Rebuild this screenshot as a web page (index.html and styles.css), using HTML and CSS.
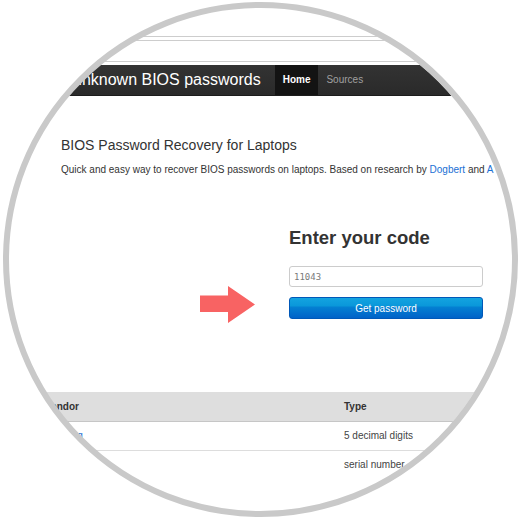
FILE: index.html
```html
<!DOCTYPE html>
<html lang="en">
  <head>
    <meta charset="UTF-8" />
    <meta name="viewport" content="width=device-width, initial-scale=1.0" />
    <title>BIOS Password Recovery for Laptops</title>
    <link rel="stylesheet" href="styles.css">
  </head>
  <body>
    <div class="page">
      <div class="chrome">
        <div class="chrome-tabs"></div>
        <div class="chrome-address"></div>
      </div>

      <nav class="topbar">
        <a class="brand" href="#">unknown BIOS passwords</a>
        <ul class="nav">
          <li class="active"><a href="#">Home</a></li>
          <li><a href="#">Sources</a></li>
        </ul>
      </nav>

      <div class="intro">
        <h1>BIOS Password Recovery for Laptops</h1>
        <p>Quick and easy way to recover BIOS passwords on laptops. Based on research by <a href="#">Dogbert</a> and <a href="#">A</a></p>
      </div>

      <div class="code-row">
        <svg class="arrow" width="55" height="37" viewBox="0 0 55 37">
          <polygon points="0,9.5 28,9.5 28,0 55,18.5 28,37 28,26 0,26" fill="#f86363" />
        </svg>
        <form class="code-form" onsubmit="event.preventDefault()">
          <h2>Enter your code</h2>
          <input type="text" class="code-input" value="11043" />
          <button type="submit" class="btn-primary">Get password</button>
        </form>
      </div>

      <table class="vendors">
        <thead>
          <tr><th class="col-vendor">Vendor</th><th>Type</th></tr>
        </thead>
        <tbody>
          <tr><td><a href="#">Compaq</a></td><td>5 decimal digits</td></tr>
          <tr><td><a href="#">Dell</a></td><td>serial number</td></tr>
        </tbody>
      </table>
    </div>
    <div class="lens-ring"></div>
  </body>
</html>
```

FILE: styles.css
```css
* {
  margin: 0;
  padding: 0;
  box-sizing: border-box;
}

body {
  font-family: "Liberation Sans", Arial, sans-serif;
  background: #ffffff;
  color: #333333;
  width: 520px;
  height: 520px;
  overflow: hidden;
}

a {
  color: #1a6fd4;
  text-decoration: none;
}

/* pagina ritagliata dalla lente */
.page {
  width: 520px;
  height: 520px;
  overflow: hidden;
  clip-path: circle(252px at 260px 259.5px);
}

.lens-ring {
  position: absolute;
  left: 2.5px;
  top: 2px;
  width: 515px;
  height: 515px;
  border: 6px solid #c9c9c9;
  border-radius: 50%;
  pointer-events: none;
}

/* barra del browser */
.chrome {
  padding-top: 36px;
}

.chrome-tabs {
  height: 5px;
  border-top: 1px solid #cdcdcd;
  border-bottom: 1px solid #cdcdcd;
}

.chrome-address {
  height: 21px;
  border-bottom: 1px solid #cdcdcd;
}

/* navbar */
.topbar {
  margin-top: 3px;
  height: 31px;
  background: linear-gradient(#333333, #2a2a2a);
  border-bottom: 1px solid #1c1c1c;
  display: flex;
  align-items: stretch;
  padding-left: 73px;
}

.brand {
  color: #ffffff;
  font-size: 16px;
  line-height: 30px;
  margin-right: 14px;
}

.nav {
  list-style: none;
  display: flex;
}

.nav a {
  display: block;
  padding: 0 8px;
  font-size: 10px;
  line-height: 30px;
  color: #a0a0a0;
}

.nav .active a {
  background: #131313;
  color: #ffffff;
  font-weight: bold;
}

/* intro */
.intro {
  padding: 39px 0 0 61px;
}

.intro h1 {
  font-size: 14px;
  font-weight: normal;
  line-height: 20px;
}

.intro p {
  margin-top: 8px;
  font-size: 10px;
  line-height: 14px;
  white-space: nowrap;
}

/* form codice */
.code-row {
  margin-top: 50px;
  padding-left: 200px;
  display: flex;
  align-items: flex-end;
  gap: 34px;
}

.arrow {
  display: block;
  margin-bottom: -4px;
}

.code-form {
  width: 194px;
  display: flex;
  flex-direction: column;
}

.code-form h2 {
  font-size: 18.5px;
  line-height: 22px;
  margin-bottom: 17px;
}

.code-input {
  height: 21px;
  border: 1px solid #cccccc;
  border-radius: 3px;
  padding: 0 4px;
  font-family: "DejaVu Sans Mono", "Liberation Mono", monospace;
  font-size: 9px;
  color: #7a7a7a;
}

.btn-primary {
  margin-top: 10px;
  height: 22px;
  border: 1px solid #0058b8;
  border-radius: 3px;
  background: linear-gradient(#13a3e0 0%, #0a97da 40%, #0480d2 45%, #0062c8 100%);
  color: #ffffff;
  font-family: "Liberation Sans", Arial, sans-serif;
  font-size: 10px;
  cursor: pointer;
}

/* tabella produttori */
.vendors {
  margin: 73px 0 0 37px;
  width: 470px;
  border-collapse: collapse;
  table-layout: fixed;
  font-size: 10px;
}

.vendors th,
.vendors td {
  text-align: left;
  padding: 0 8px;
  height: 29px;
}

.vendors .col-vendor {
  width: 299px;
}

.vendors th {
  background: #dedede;
  border-bottom: 1px solid #c6c6c6;
}

.vendors td {
  border-bottom: 1px solid #dddddd;
  color: #444444;
}

.vendors tr:last-child td {
  border-bottom: none;
}
```
